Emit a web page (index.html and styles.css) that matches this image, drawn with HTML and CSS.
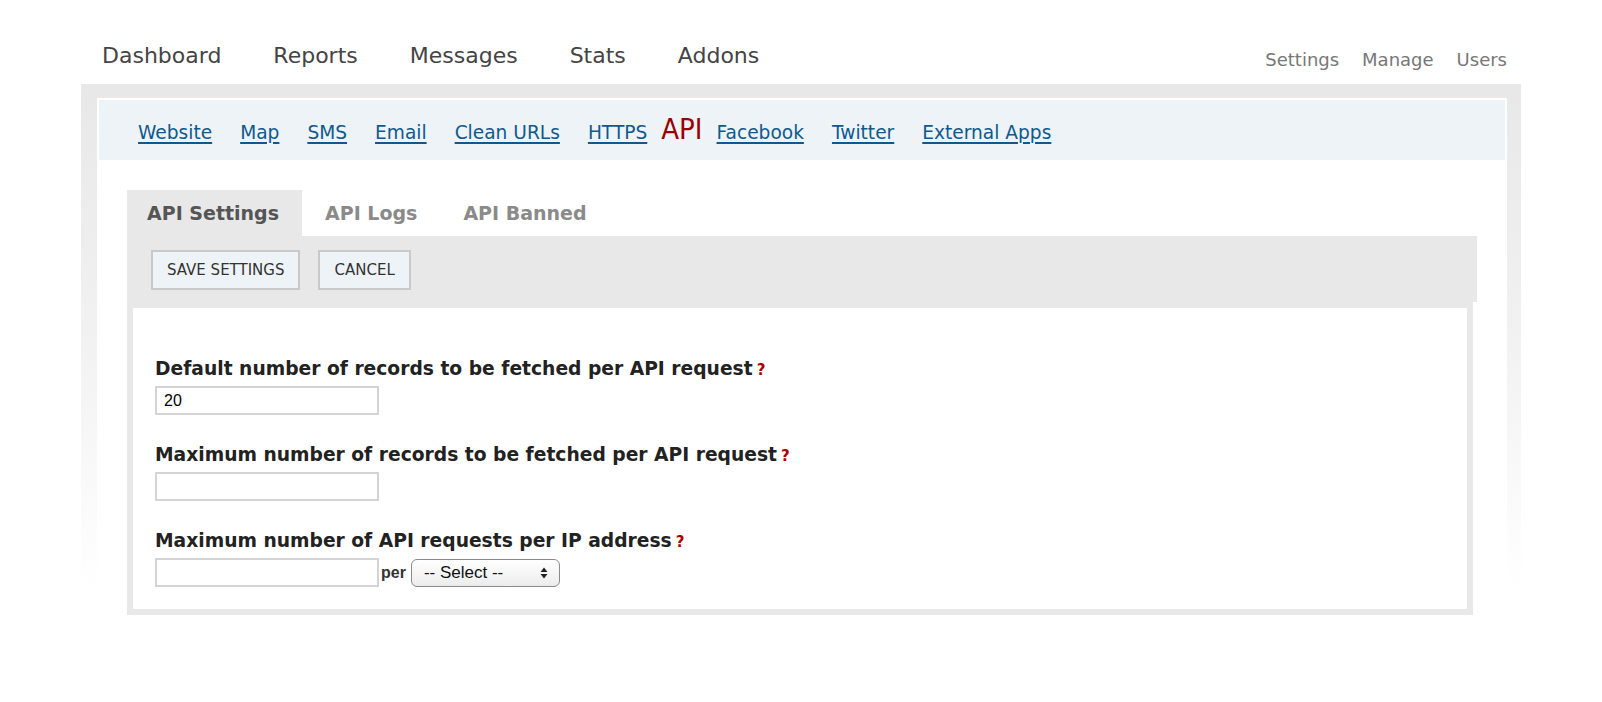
FILE: index.html
```html
<!DOCTYPE html>
<html lang="en">
<head>
<meta charset="utf-8">
<title>API Settings</title>
<link rel="stylesheet" href="styles.css">
</head>
<body>
<div class="page">
  <header class="topbar">
    <nav class="mainnav">
      <a href="#">Dashboard</a>
      <a href="#">Reports</a>
      <a href="#">Messages</a>
      <a href="#">Stats</a>
      <a href="#">Addons</a>
    </nav>
    <nav class="usernav">
      <a href="#">Settings</a>
      <a href="#">Manage</a>
      <a href="#">Users</a>
    </nav>
  </header>
  <div class="frame">
    <div class="panel">
      <div class="subnav">
        <a href="#">Website</a>
        <a href="#">Map</a>
        <a href="#">SMS</a>
        <a href="#">Email</a>
        <a href="#">Clean URLs</a>
        <a href="#">HTTPS</a>
        <span class="current">API</span>
        <a href="#">Facebook</a>
        <a href="#">Twitter</a>
        <a href="#">External Apps</a>
      </div>
      <div class="settings">
        <div class="tabs">
          <span class="tab active">API Settings</span>
          <span class="tab">API Logs</span>
          <span class="tab">API Banned</span>
        </div>
        <div class="toolbar">
          <button class="btn" type="button">SAVE SETTINGS</button>
          <button class="btn" type="button">CANCEL</button>
        </div>
        <div class="formbox">
          <div class="field">
            <label class="label">Default number of records to be fetched per API request<span class="help">?</span></label>
            <div class="row"><input class="text" type="text" value="20"></div>
          </div>
          <div class="field">
            <label class="label">Maximum number of records to be fetched per API request<span class="help">?</span></label>
            <div class="row"><input class="text" type="text" value=""></div>
          </div>
          <div class="field last">
            <label class="label">Maximum number of API requests per IP address<span class="help">?</span></label>
            <div class="row">
              <input class="text" type="text" value="">
              <span class="per">per</span>
              <span class="select-wrap">
                <select class="select">
                  <option>-- Select --</option>
                </select>
                <svg class="arrows" width="8" height="12" viewBox="0 0 8 12"><path d="M4 0.5 L7.5 5 H0.5 Z M4 11.5 L7.5 7 H0.5 Z" fill="#222"/></svg>
              </span>
            </div>
          </div>
        </div>
      </div>
    </div>
  </div>
</div>
</body>
</html>
```

FILE: styles.css
```css
* { box-sizing: border-box; }
html, body { margin: 0; padding: 0; background: #fff; }
body { font-family: "DejaVu Sans", "Liberation Sans", sans-serif; color: #333; }

.page { width: 1440px; margin: 0 auto; }

.topbar {
  display: flex;
  justify-content: space-between;
  align-items: flex-start;
  height: 84px;
}
.mainnav {
  display: flex;
  gap: 52px;
  padding: 41px 0 0 21px;
}
.mainnav a {
  font-size: 22px;
  line-height: 30px;
  color: #444;
  text-decoration: none;
}
.usernav {
  display: flex;
  gap: 23px;
  padding: 45px 14px 0 0;
}
.usernav a {
  font-size: 18px;
  line-height: 30px;
  color: #777;
  text-decoration: none;
}

.frame {
  background: linear-gradient(to bottom, #e8e8e8 0, #f1f1f1 240px, #fff 505px);
  padding: 14px 14px 0 16px;
}
.panel {
  background: #fff;
  padding: 2px 2px 34px;
}

.subnav {
  display: flex;
  align-items: baseline;
  height: 60px;
  padding: 14px 0 0 25px;
  background: #eef3f8;
}
.subnav a {
  font-size: 18.6px;
  line-height: 24px;
  margin: 0 14px;
  color: #0f5a8d;
  text-decoration: underline;
  text-underline-offset: 3px;
  text-decoration-thickness: 2px;
}
.subnav .current {
  font-family: "DejaVu Sans Condensed", "DejaVu Sans", sans-serif;
  font-size: 29px;
  line-height: 30px;
  color: #990000;
}

.settings { margin: 30px 28px 0; }

.tabs { display: flex; height: 46px; }
.tab {
  font-size: 19px;
  font-weight: bold;
  line-height: 46px;
  padding: 0 23px 0 23px;
  color: #8a8a8a;
}
.tab.active { background: #e8e8e8; color: #555; padding: 0 23px 0 20px; }

.toolbar {
  display: flex;
  gap: 18px;
  background: #e8e8e8;
  padding: 14px 24px 12px;
}
.btn {
  height: 40px;
  padding: 0 14px;
  background: #eef3f8;
  border: 2px solid #c9c9c9;
  font-family: "DejaVu Sans", sans-serif;
  font-size: 15px;
  color: #333;
}

.formbox {
  margin-right: 4px;
  border: 6px solid #e8e8e8;
  background: #fff;
  padding: 50px 22px 22px;
}
.field { margin-bottom: 29px; }
.field.last { margin-bottom: 0; }
.label {
  display: block;
  font-size: 18.7px;
  font-weight: bold;
  line-height: 22px;
  color: #222;
  margin-bottom: 5px;
}
.help {
  font-size: 15px;
  color: #aa0000;
  margin-left: 4px;
}
.row { display: flex; align-items: center; }
.text {
  width: 224px;
  height: 29px;
  border: 2px solid #d4d4d4;
  padding: 0 7px;
  font-family: "Liberation Sans", Arial, sans-serif;
  font-size: 16px;
  color: #000;
  background: #fff;
  outline: none;
}
.per {
  font-family: "Liberation Sans", Arial, sans-serif;
  font-weight: bold;
  font-size: 16px;
  color: #333;
  margin: 0 5px 0 2px;
}
.select-wrap { position: relative; display: inline-block; }
.select {
  appearance: none;
  -webkit-appearance: none;
  width: 149px;
  height: 28px;
  border: 1px solid #8a8a8a;
  border-radius: 6px;
  background: linear-gradient(#ffffff, #ececec);
  padding: 0 0 0 12px;
  font-family: "Liberation Sans", Arial, sans-serif;
  font-size: 17px;
  color: #111;
}
.arrows {
  position: absolute;
  right: 12px;
  top: 8px;
  pointer-events: none;
}
```
